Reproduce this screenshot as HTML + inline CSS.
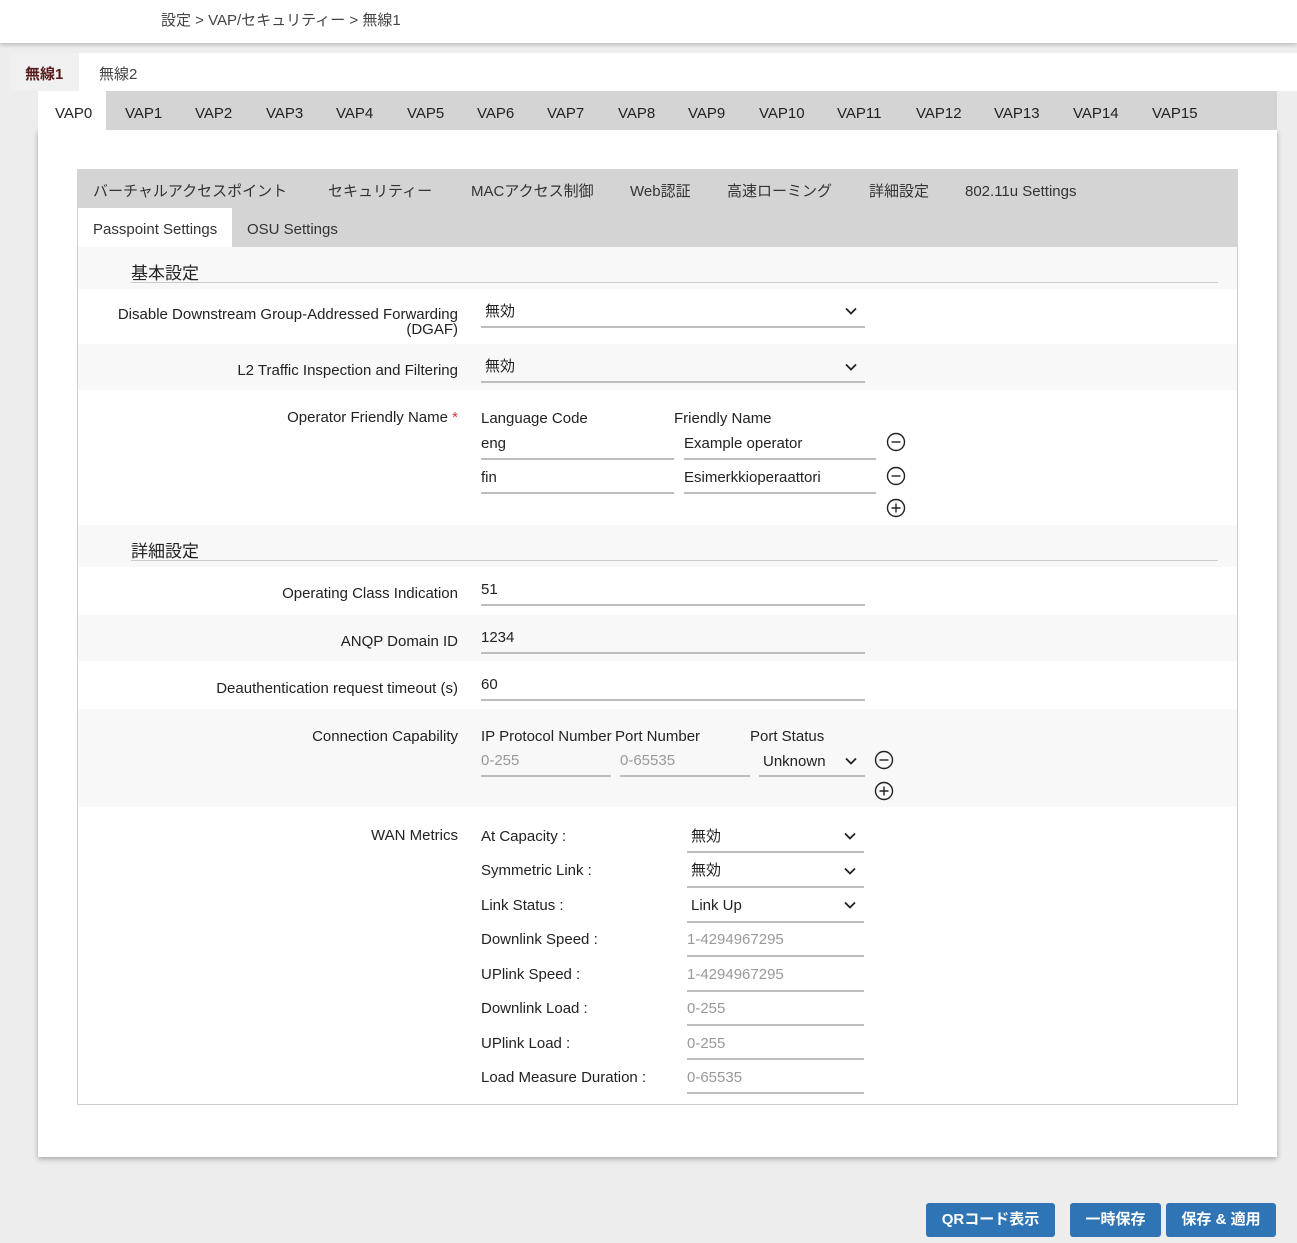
<!DOCTYPE html>
<html><head><meta charset="utf-8">
<style>
*{margin:0;padding:0;box-sizing:border-box}
body{width:1297px;height:1243px;background:#ededed;font-family:"Liberation Sans","Noto Sans CJK JP",sans-serif;color:#222;position:relative;overflow:hidden;font-size:15px}
.a{position:absolute;white-space:nowrap;line-height:18px;margin-top:2px}
.r{position:absolute;white-space:nowrap;line-height:18px;text-align:right;margin-top:2px}
.bg{position:absolute}
.ul{position:absolute;height:2px;background:#bdbdbd}
.ph{color:#999}
.chev{position:absolute;width:12px;height:8px}
.ic{position:absolute;width:20px;height:20px}
.btn{position:absolute;background:#2f75b5;color:#fff;border-radius:3px;font-size:15px;font-weight:bold;text-align:center;line-height:34px;height:34px;top:1203px}
</style></head><body>
<div class="bg" style="left:0;top:0;width:1297px;height:43px;background:#fff;box-shadow:0 2px 4px rgba(0,0,0,.2)"></div>
<div class="a" style="left:161px;top:10px;font-size:15px;color:#444">設定 &gt; VAP/セキュリティー &gt; 無線1</div>
<div class="bg" style="left:79px;top:53px;width:1218px;height:38px;background:#fff"></div>
<div class="bg" style="left:10px;top:53px;width:69px;height:38px;background:#f0f0f0"></div>
<div class="a" style="left:25px;top:64px;font-weight:bold;color:#5a1a1a">無線1</div>
<div class="a" style="left:99px;top:64px;color:#444">無線2</div>
<div class="bg" style="left:38px;top:130px;width:1239px;height:1027px;background:#fff;box-shadow:0 2px 5px rgba(0,0,0,.3)"></div>
<div class="bg" style="left:38px;top:91px;width:1239px;height:39px;background:#d4d4d4"></div>
<div class="bg" style="left:38px;top:91px;width:68px;height:39px;background:#fff"></div>
<div class="a" style="left:55px;top:103px">VAP0</div><div class="a" style="left:125px;top:103px">VAP1</div><div class="a" style="left:195px;top:103px">VAP2</div><div class="a" style="left:266px;top:103px">VAP3</div><div class="a" style="left:336px;top:103px">VAP4</div><div class="a" style="left:407px;top:103px">VAP5</div><div class="a" style="left:477px;top:103px">VAP6</div><div class="a" style="left:547px;top:103px">VAP7</div><div class="a" style="left:618px;top:103px">VAP8</div><div class="a" style="left:688px;top:103px">VAP9</div><div class="a" style="left:759px;top:103px">VAP10</div><div class="a" style="left:837px;top:103px">VAP11</div><div class="a" style="left:916px;top:103px">VAP12</div><div class="a" style="left:994px;top:103px">VAP13</div><div class="a" style="left:1073px;top:103px">VAP14</div><div class="a" style="left:1152px;top:103px">VAP15</div>

<div class="bg" style="left:77px;top:169px;width:1161px;height:936px;border:1px solid #ccc;background:#fff"></div>
<div class="bg" style="left:77px;top:169px;width:1161px;height:78px;background:#d4d4d4"></div>
<div class="bg" style="left:78px;top:208px;width:154px;height:39px;background:#fff"></div>
<div class="a" style="left:93px;top:181px;color:#333">バーチャルアクセスポイント</div>
<div class="a" style="left:328px;top:181px;color:#333">セキュリティー</div>
<div class="a" style="left:471px;top:181px;color:#333">MACアクセス制御</div>
<div class="a" style="left:630px;top:181px;color:#333">Web認証</div>
<div class="a" style="left:727px;top:181px;color:#333">高速ローミング</div>
<div class="a" style="left:869px;top:181px;color:#333">詳細設定</div>
<div class="a" style="left:965px;top:181px;color:#333">802.11u Settings</div>
<div class="a" style="left:93px;top:219px;color:#333">Passpoint Settings</div>
<div class="a" style="left:247px;top:219px;color:#333">OSU Settings</div>

<div class="bg" style="left:78px;top:247px;width:1159px;height:42px;background:#f8f8f8"></div>
<div class="bg" style="left:78px;top:344px;width:1159px;height:46px;background:#f8f8f8"></div>
<div class="bg" style="left:78px;top:525px;width:1159px;height:42px;background:#f8f8f8"></div>
<div class="bg" style="left:78px;top:615px;width:1159px;height:46px;background:#f8f8f8"></div>
<div class="bg" style="left:78px;top:709px;width:1159px;height:98px;background:#f8f8f8"></div>

<div class="a" style="left:131px;top:263px;font-size:17px">基本設定</div>
<div class="bg" style="left:131px;top:282px;width:1087px;height:1px;background:#ccc"></div>
<div class="a" style="left:131px;top:541px;font-size:17px">詳細設定</div>
<div class="bg" style="left:131px;top:560px;width:1087px;height:1px;background:#ccc"></div>

<div class="r" style="right:839px;top:305px;line-height:15px">Disable Downstream Group-Addressed Forwarding<br>(DGAF)</div>
<div class="a" style="left:485px;top:301px">無効</div><div class="ul" style="left:481px;top:326px;width:384px"></div>
<svg class="chev" style="left:845px;top:307px" viewBox="0 0 12 8"><path d="M1 1.5L6 6.5L11 1.5" fill="none" stroke="#222" stroke-width="1.8"/></svg>
<div class="r" style="right:839px;top:360px">L2 Traffic Inspection and Filtering</div>
<div class="a" style="left:485px;top:356px">無効</div><div class="ul" style="left:481px;top:381px;width:384px"></div>
<svg class="chev" style="left:845px;top:363px" viewBox="0 0 12 8"><path d="M1 1.5L6 6.5L11 1.5" fill="none" stroke="#222" stroke-width="1.8"/></svg>

<div class="r" style="right:839px;top:407px">Operator Friendly Name <span style="color:#d33">*</span></div>
<div class="a" style="left:481px;top:408px">Language Code</div>
<div class="a" style="left:674px;top:408px">Friendly Name</div>
<div class="a" style="left:481px;top:433px">eng</div><div class="ul" style="left:481px;top:458px;width:193px"></div>
<div class="a" style="left:684px;top:433px">Example operator</div><div class="ul" style="left:684px;top:458px;width:192px"></div>
<div class="a" style="left:481px;top:467px">fin</div><div class="ul" style="left:481px;top:492px;width:193px"></div>
<div class="a" style="left:684px;top:467px">Esimerkkioperaattori</div><div class="ul" style="left:684px;top:492px;width:192px"></div>
<svg class="ic" style="left:886px;top:432px" viewBox="0 0 20 20"><circle cx="10" cy="10" r="8.5" fill="none" stroke="#222" stroke-width="1.4"/><path d="M5.5 10H14.5" stroke="#222" stroke-width="1.4"/></svg>
<svg class="ic" style="left:886px;top:466px" viewBox="0 0 20 20"><circle cx="10" cy="10" r="8.5" fill="none" stroke="#222" stroke-width="1.4"/><path d="M5.5 10H14.5" stroke="#222" stroke-width="1.4"/></svg>
<svg class="ic" style="left:886px;top:498px" viewBox="0 0 20 20"><circle cx="10" cy="10" r="8.5" fill="none" stroke="#222" stroke-width="1.4"/><path d="M5.5 10H14.5M10 5.5V14.5" stroke="#222" stroke-width="1.4"/></svg>

<div class="r" style="right:839px;top:583px">Operating Class Indication</div>
<div class="a" style="left:481px;top:579px">51</div><div class="ul" style="left:481px;top:604px;width:384px"></div>
<div class="r" style="right:839px;top:631px">ANQP Domain ID</div>
<div class="a" style="left:481px;top:627px">1234</div><div class="ul" style="left:481px;top:652px;width:384px"></div>
<div class="r" style="right:839px;top:678px">Deauthentication request timeout (s)</div>
<div class="a" style="left:481px;top:674px">60</div><div class="ul" style="left:481px;top:699px;width:384px"></div>

<div class="r" style="right:839px;top:726px">Connection Capability</div>
<div class="a" style="left:481px;top:726px">IP Protocol Number</div>
<div class="a" style="left:615px;top:726px">Port Number</div>
<div class="a" style="left:750px;top:726px">Port Status</div>
<div class="a ph" style="left:481px;top:750px">0-255</div><div class="ul" style="left:481px;top:775px;width:130px"></div>
<div class="a ph" style="left:620px;top:750px">0-65535</div><div class="ul" style="left:620px;top:775px;width:130px"></div>
<div class="a" style="left:763px;top:751px">Unknown</div><div class="ul" style="left:759px;top:775px;width:106px"></div>
<svg class="chev" style="left:845px;top:757px" viewBox="0 0 12 8"><path d="M1 1.5L6 6.5L11 1.5" fill="none" stroke="#222" stroke-width="1.8"/></svg>
<svg class="ic" style="left:874px;top:750px" viewBox="0 0 20 20"><circle cx="10" cy="10" r="8.5" fill="none" stroke="#222" stroke-width="1.4"/><path d="M5.5 10H14.5" stroke="#222" stroke-width="1.4"/></svg>
<svg class="ic" style="left:874px;top:781px" viewBox="0 0 20 20"><circle cx="10" cy="10" r="8.5" fill="none" stroke="#222" stroke-width="1.4"/><path d="M5.5 10H14.5M10 5.5V14.5" stroke="#222" stroke-width="1.4"/></svg>

<div class="r" style="right:839px;top:825px">WAN Metrics</div>
<div class="a" style="left:481px;top:826px">At Capacity :</div>
<div class="a" style="left:691px;top:826px">無効</div><div class="ul" style="left:687px;top:851px;width:177px"></div>
<svg class="chev" style="left:844px;top:832px" viewBox="0 0 12 8"><path d="M1 1.5L6 6.5L11 1.5" fill="none" stroke="#222" stroke-width="1.8"/></svg>
<div class="a" style="left:481px;top:860px">Symmetric Link :</div>
<div class="a" style="left:691px;top:860px">無効</div><div class="ul" style="left:687px;top:886px;width:177px"></div>
<svg class="chev" style="left:844px;top:867px" viewBox="0 0 12 8"><path d="M1 1.5L6 6.5L11 1.5" fill="none" stroke="#222" stroke-width="1.8"/></svg>
<div class="a" style="left:481px;top:895px">Link Status :</div>
<div class="a" style="left:691px;top:895px">Link Up</div><div class="ul" style="left:687px;top:921px;width:177px"></div>
<svg class="chev" style="left:844px;top:901px" viewBox="0 0 12 8"><path d="M1 1.5L6 6.5L11 1.5" fill="none" stroke="#222" stroke-width="1.8"/></svg>
<div class="a" style="left:481px;top:929px">Downlink Speed :</div>
<div class="a ph" style="left:687px;top:929px">1-4294967295</div><div class="ul" style="left:687px;top:955px;width:177px"></div>
<div class="a" style="left:481px;top:964px">UPlink Speed :</div>
<div class="a ph" style="left:687px;top:964px">1-4294967295</div><div class="ul" style="left:687px;top:990px;width:177px"></div>
<div class="a" style="left:481px;top:998px">Downlink Load :</div>
<div class="a ph" style="left:687px;top:998px">0-255</div><div class="ul" style="left:687px;top:1024px;width:177px"></div>
<div class="a" style="left:481px;top:1033px">UPlink Load :</div>
<div class="a ph" style="left:687px;top:1033px">0-255</div><div class="ul" style="left:687px;top:1058px;width:177px"></div>
<div class="a" style="left:481px;top:1067px">Load Measure Duration :</div>
<div class="a ph" style="left:687px;top:1067px">0-65535</div><div class="ul" style="left:687px;top:1092px;width:177px"></div>

<div class="btn" style="left:926px;width:129px">QRコード表示</div>
<div class="btn" style="left:1070px;width:91px">一時保存</div>
<div class="btn" style="left:1166px;width:110px">保存 &amp; 適用</div>
</body></html>
